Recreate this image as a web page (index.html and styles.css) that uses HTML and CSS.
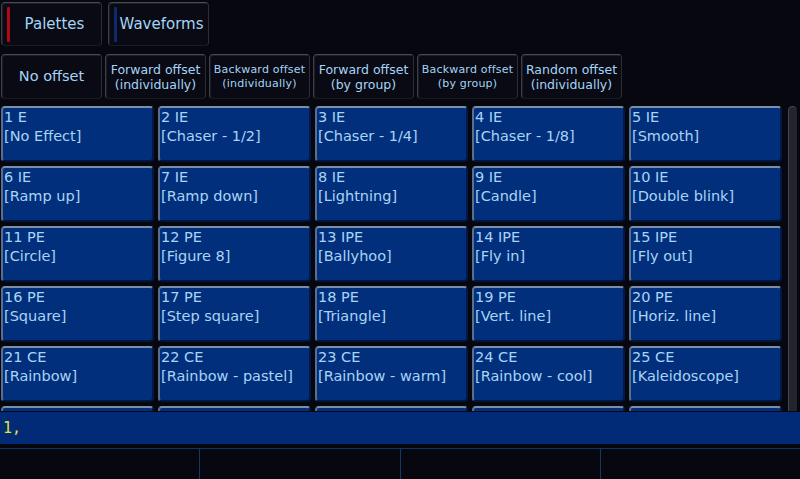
FILE: index.html
```html
<!DOCTYPE html>
<html>
<head>
<meta charset="utf-8">
<link rel="stylesheet" href="styles.css">
</head>
<body>
<div class="app">
  <div class="tabs">
    <div class="btn tab"><span class="mark red"></span><span class="tab-label">Palettes</span></div>
    <div class="btn tab"><span class="mark blue"></span><span class="tab-label">Waveforms</span></div>
  </div>
  <div class="offsets">
    <div class="btn off big">No offset</div>
    <div class="btn off mid">Forward offset<br>(individually)</div>
    <div class="btn off small">Backward offset<br>(individually)</div>
    <div class="btn off mid">Forward offset<br>(by group)</div>
    <div class="btn off small">Backward offset<br>(by group)</div>
    <div class="btn off mid">Random offset<br>(individually)</div>
  </div>
  <div class="main">
    <div class="grid">
      <div class="cell">1 E<br>[No Effect]</div>
      <div class="cell">2 IE<br>[Chaser - 1/2]</div>
      <div class="cell">3 IE<br>[Chaser - 1/4]</div>
      <div class="cell">4 IE<br>[Chaser - 1/8]</div>
      <div class="cell">5 IE<br>[Smooth]</div>
      <div class="cell">6 IE<br>[Ramp up]</div>
      <div class="cell">7 IE<br>[Ramp down]</div>
      <div class="cell">8 IE<br>[Lightning]</div>
      <div class="cell">9 IE<br>[Candle]</div>
      <div class="cell">10 IE<br>[Double blink]</div>
      <div class="cell">11 PE<br>[Circle]</div>
      <div class="cell">12 PE<br>[Figure 8]</div>
      <div class="cell">13 IPE<br>[Ballyhoo]</div>
      <div class="cell">14 IPE<br>[Fly in]</div>
      <div class="cell">15 IPE<br>[Fly out]</div>
      <div class="cell">16 PE<br>[Square]</div>
      <div class="cell">17 PE<br>[Step square]</div>
      <div class="cell">18 PE<br>[Triangle]</div>
      <div class="cell">19 PE<br>[Vert. line]</div>
      <div class="cell">20 PE<br>[Horiz. line]</div>
      <div class="cell">21 CE<br>[Rainbow]</div>
      <div class="cell">22 CE<br>[Rainbow - pastel]</div>
      <div class="cell">23 CE<br>[Rainbow - warm]</div>
      <div class="cell">24 CE<br>[Rainbow - cool]</div>
      <div class="cell">25 CE<br>[Kaleidoscope]</div>
      <div class="cell"></div>
      <div class="cell"></div>
      <div class="cell"></div>
      <div class="cell"></div>
      <div class="cell"></div>
    </div>
    <div class="scrollbar"></div>
  </div>
  <div class="cmdline"><span class="cmd">1,</span></div>
  <div class="softkeys">
    <div class="key"></div>
    <div class="key"></div>
    <div class="key"></div>
    <div class="key"></div>
  </div>
</div>
</body>
</html>
```
FILE: styles.css
```css
html, body {
  margin: 0;
  padding: 0;
  background: #06070f;
  width: 800px;
  height: 479px;
  overflow: hidden;
  font-family: "DejaVu Sans", sans-serif;
}
.app {
  display: flex;
  flex-direction: column;
  width: 800px;
  height: 479px;
}
.btn {
  box-sizing: border-box;
  background: #090a13;
  border: 1px solid #2c2d36;
  border-top-color: #4a4b55;
  border-left-color: #3c3d47;
  border-bottom-color: #1a1b22;
  border-radius: 4px;
  color: #a6d4f6;
  box-shadow: inset 1px 1px 0 #1c1d26;
}
.tabs {
  display: flex;
  gap: 6px;
  padding: 2px 0 0 1px;
  height: 46px;
  box-sizing: border-box;
}
.tab {
  width: 101px;
  height: 44px;
  display: flex;
  align-items: center;
  padding-left: 5px;
}
.mark {
  width: 3px;
  height: 35px;
  border-radius: 1px;
}
.mark.red { background: #b00a14; }
.mark.blue { background: #0d2a6a; }
.tab-label {
  flex: 1;
  text-align: center;
  font-size: 15px;
  padding-right: 2px;
}
.offsets {
  display: flex;
  gap: 3px;
  padding: 8px 0 0 1px;
  height: 53px;
  box-sizing: border-box;
}
.off {
  width: 101px;
  height: 45px;
  display: flex;
  align-items: center;
  justify-content: center;
  text-align: center;
  line-height: 15px;
}
.off.big { font-size: 14.5px; }
.off.mid { font-size: 12.5px; }
.off.small { font-size: 11px; line-height: 14px; letter-spacing: 0.2px; }
.main {
  display: flex;
  padding: 7px 0 0 1px;
  height: 312px;
  box-sizing: border-box;
  overflow: hidden;
}
.grid {
  display: grid;
  grid-template-columns: repeat(5, 153px);
  grid-auto-rows: 56px;
  column-gap: 4px;
  row-gap: 4px;
  width: 781px;
}
.cell {
  box-sizing: border-box;
  background: #022f7b;
  border: 1px solid #2c3f66;
  border-top: 2px solid #7d8ea8;
  border-left: 2px solid #5d6e8c;
  border-bottom: 2px solid #01153d;
  border-right: 2px solid #04194a;
  border-radius: 4px;
  color: #a8d4f6;
  font-size: 14.5px;
  line-height: 19px;
  padding: 0 0 0 1px;
  white-space: nowrap;
  overflow: hidden;
}
.scrollbar {
  width: 9px;
  height: 330px;
  margin-left: 6px;
  background: #23242c;
  border-left: 1px solid #44454f;
  border-top: 1px solid #4a4b55;
  border-radius: 5px 5px 0 0;
  box-sizing: border-box;
}
.cmdline {
  height: 32px;
  background: #012b76;
  display: flex;
  align-items: center;
  padding-left: 3px;
  margin-top: 1px;
}
.cmd {
  font-family: "DejaVu Sans Mono", monospace;
  font-size: 15px;
  color: #e8e23a;
}
.softkeys {
  display: flex;
  margin-top: 4px;
  border-top: 1px solid #0e3562;
  flex: 1;
}
.key {
  flex: 1;
  border-right: 1px solid #0e3a6a;
}
.key:last-child { border-right: none; }
```
